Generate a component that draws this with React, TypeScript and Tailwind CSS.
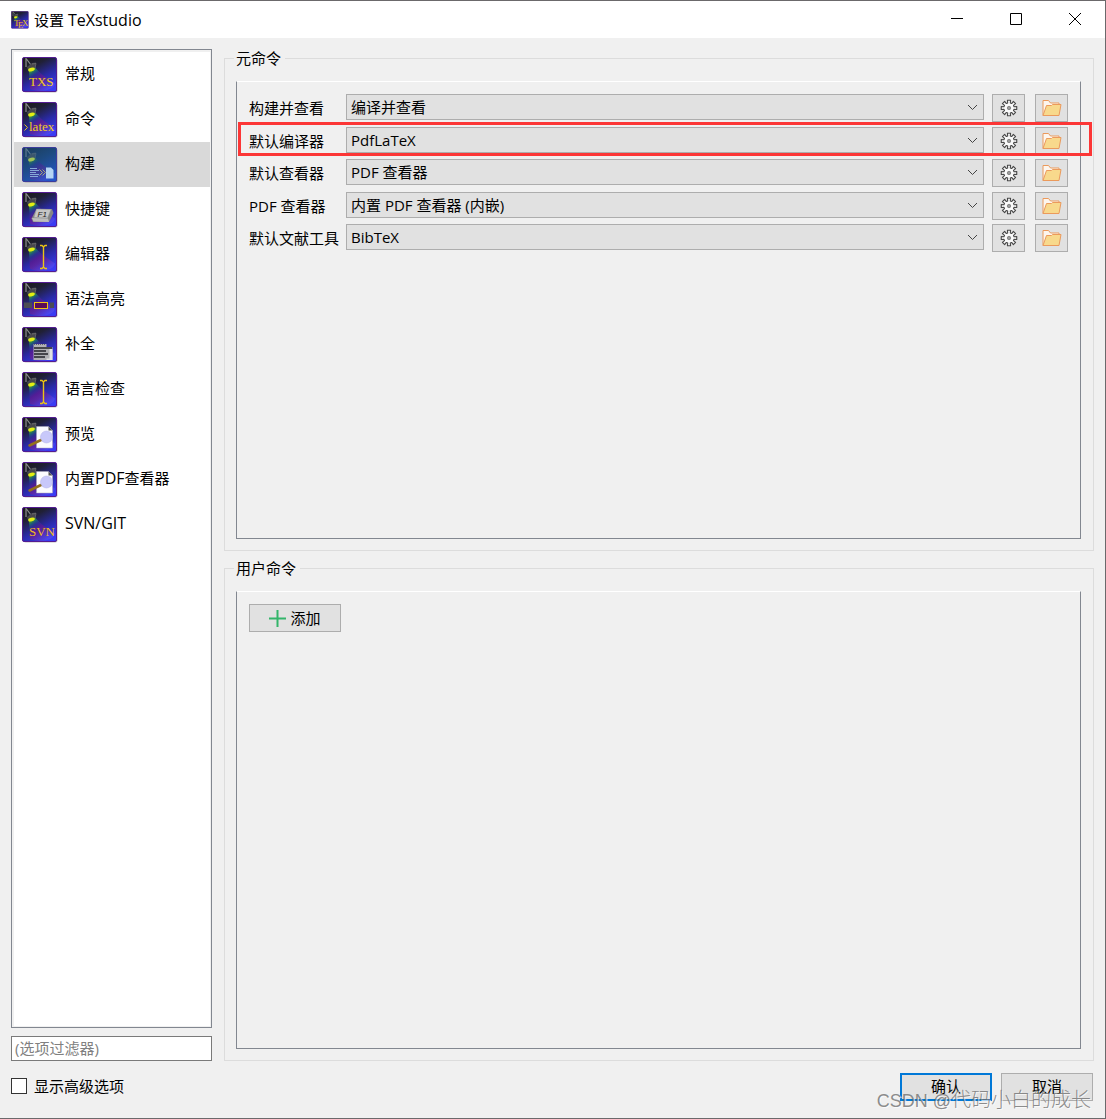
import React, { useState } from "react";

type Glyph =
  | "txs"
  | "latex"
  | "build"
  | "key"
  | "cursor"
  | "highlight"
  | "complete"
  | "preview"
  | "svn"
  | "tex";

const pages: { label: string; glyph: Glyph }[] = [
  { label: "常规", glyph: "txs" },
  { label: "命令", glyph: "latex" },
  { label: "构建", glyph: "build" },
  { label: "快捷键", glyph: "key" },
  { label: "编辑器", glyph: "cursor" },
  { label: "语法高亮", glyph: "highlight" },
  { label: "补全", glyph: "complete" },
  { label: "语言检查", glyph: "cursor" },
  { label: "预览", glyph: "preview" },
  { label: "内置PDF查看器", glyph: "preview" },
  { label: "SVN/GIT", glyph: "svn" },
];

const commands = [
  { id: "build", label: "构建并查看", value: "编译并查看", marked: false },
  { id: "compiler", label: "默认编译器", value: "PdfLaTeX", marked: true },
  { id: "viewer", label: "默认查看器", value: "PDF 查看器", marked: false },
  { id: "pdf", label: "PDF 查看器", value: "内置 PDF 查看器 (内嵌)", marked: false },
  { id: "bib", label: "默认文献工具", value: "BibTeX", marked: false },
];

function IconDefs() {
  return (
    <svg className="absolute h-0 w-0" aria-hidden="true">
      <defs>
        <linearGradient id="tile" x1="0.2" y1="0" x2="0.75" y2="1">
          <stop offset="0" stopColor="#1c1c1e" />
          <stop offset="0.25" stopColor="#202036" />
          <stop offset="0.6" stopColor="#2a2aa6" />
          <stop offset="1" stopColor="#3a3cf4" />
        </linearGradient>
        <linearGradient id="tileOn" x1="0.2" y1="0" x2="0.75" y2="1">
          <stop offset="0" stopColor="#1c3f5e" />
          <stop offset="0.4" stopColor="#1d4a80" />
          <stop offset="1" stopColor="#2456c8" />
        </linearGradient>
        <linearGradient id="beam" x1="9" y1="11" x2="24" y2="33" gradientUnits="userSpaceOnUse">
          <stop offset="0" stopColor="#b8d000" />
          <stop offset="0.1" stopColor="#3a9a3c" />
          <stop offset="0.2" stopColor="#1d5a7e" />
          <stop offset="0.3" stopColor="#30309a" stopOpacity="0.8" />
          <stop offset="0.45" stopColor="#5a1a94" stopOpacity="0.9" />
          <stop offset="0.65" stopColor="#7a2090" stopOpacity="0.6" />
          <stop offset="1" stopColor="#5a50f0" stopOpacity="0.6" />
        </linearGradient>
      </defs>
    </svg>
  );
}

function GlyphShape({ glyph }: { glyph: Glyph }) {
  const serif = "font-[Liberation_Serif]";
  switch (glyph) {
    case "txs":
      return <text x="7" y="29" fontSize="13" fill="#f0cc1c" className={serif}>TXS</text>;
    case "svn":
      return <text x="7" y="29" fontSize="13" fill="#f0bc1c" className={serif}>SVN</text>;
    case "latex":
      return (
        <>
          <path d="M2.5 22.500l3 3-3 3" fill="none" stroke="#e8c21c" />
          <text x="7" y="29" fontSize="13" fill="#f0cc1c" className={serif}>latex</text>
        </>
      );
    case "tex":
      return (
        <>
          <text x="6" y="30" fontSize="18" fill="#e8c21c" className={serif}>T</text>
          <text x="14" y="34" fontSize="17" fill="#e8c21c" className={serif}>E</text>
          <text x="22" y="30" fontSize="18" fill="#e8c21c" className={serif}>X</text>
        </>
      );
    case "build":
      return (
        <>
          <path d="M8 21.500h7M8 23.500h9M8 25.500h6M8 27.500h9M8 29.500h8" stroke="#86a8d8" />
          <path d="M17.500 22.500l3 3-3 3M20.500 22.500l3 3-3 3" fill="none" stroke="#a8a878" />
          <path d="M24 20.500h5l2.500 2.500v8.500h-7.500z" fill="#b4d4f4" />
        </>
      );
    case "key":
      return (
        <>
          <path d="M14.500 17h15.500l1.500 4-4.500 9h-16l-1.500-3.500z" fill="#858585" />
          <path d="M14.500 17l14.500.5-3.500 8.500-13.500-.5z" fill="#c6c6c6" stroke="#9a9a9a" strokeWidth="0.5" />
          <path d="M10 26l16 .5 1 3.500-15.500-.5z" fill="#bdbdbd" />
          <text x="15.500" y="25" fontSize="8" fontStyle="italic" fill="#222" className="font-[Liberation_Sans]">F1</text>
        </>
      );
    case "cursor":
      return (
        <path
          d="M18 8.500h2l1.500 1.500 1.500-1.500h2M21.500 10v20M18 31.500h2l1.500-1.500 1.500 1.500h2"
          fill="none"
          stroke="#ecc414"
          strokeWidth="1.400"
        />
      );
    case "highlight":
      return (
        <>
          <path d="M2 20.500h8v5.500H2zM28 20.500h4v5.500h-4z" fill="#4c4c54" />
          <rect x="12.500" y="20.500" width="13" height="6" fill="#5c0a58" stroke="#ecc414" />
        </>
      );
    case "complete":
      return (
        <>
          <path d="M11.500 17h13v3h6v13h-19z" fill="#b0b0b4" />
          <path d="M12 17.500h12" stroke="#60606c" strokeDasharray="1 1" />
          <path d="M12 21h18M12 24h12M12 27h14M12 30h11" stroke="#46464c" strokeWidth="1.800" />
          <path d="M27.500 22h3v11h-6v-1.500h3z" fill="#e2e2e2" />
        </>
      );
    case "preview":
      return (
        <>
          <path d="M14.500 9.500h12l4 4v17.500h-16z" fill="#fbfbff" stroke="#a8a8b8" strokeWidth="0.500" />
          <path d="M26.500 9.500v4h4z" fill="#555" />
          <path d="M7.500 28.500l11.500-5.500" stroke="#94701c" strokeWidth="2.500" strokeLinecap="round" />
          <circle cx="24.500" cy="20" r="6" fill="#c8c8fa" stroke="#b0b0e8" strokeWidth="0.500" />
        </>
      );
  }
}

function Tile({ glyph, className, active = false }: { glyph: Glyph; className: string; active?: boolean }) {
  return (
    <svg viewBox="0 0 36 36" className={className} aria-hidden="true">
      <rect x="1.500" y="1.500" width="34" height="34" rx="2" fill="#000" opacity="0.25" />
      <rect x="0.500" y="0.500" width="34" height="34" rx="1.500" fill={active ? "url(#tileOn)" : "url(#tile)"} />
      <path
        d="M7 13l6-2.500 7 7 13 9c-1 7-15 9.500-25 5.500z"
        fill="url(#beam)"
        opacity={active ? 0.5 : 0.9}
      />
      <path d="M4 1v9M4.500 2l6 8" fill="none" stroke={active ? "#5c7890" : "#8a8a8c"} strokeWidth="1.200" />
      <path d="M5 10l5-4 4-.5-1.500 6-6.500 1.500z" fill={active ? "#3a566c" : "#48484c"} />
      <path d="M10 7l4-.5-1 4.500" fill="none" stroke={active ? "#4c6880" : "#707074"} strokeWidth="0.800" />
      <ellipse cx="9.500" cy="12.500" rx="3.400" ry="1.900" fill={active ? "#a2c458" : "#e2ee14"} transform="rotate(-15 9.5 12.5)" />
      <GlyphShape glyph={glyph} />
      <rect x="0.500" y="0.500" width="34" height="34" rx="1.500" fill="none" stroke={active ? "#3c3c9c" : "#541c92"} />
    </svg>
  );
}

const gearPath = (() => {
  const points: string[] = [];
  for (let i = 0; i < 8; i++) {
    const a = (i * Math.PI) / 4;
    const steps: [number, number][] = [
      [-0.25, 5.2],
      [-0.2, 7.9],
      [0.2, 7.9],
      [0.25, 5.2],
    ];
    for (const [d, r] of steps) {
      points.push(`${(9 + r * Math.sin(a + d)).toFixed(2)} ${(9 - r * Math.cos(a + d)).toFixed(2)}`);
    }
  }
  return `M${points.join("L")}Z`;
})();

function GearIcon() {
  return (
    <svg viewBox="0 0 18 18" className="h-[18px] w-[18px]" aria-hidden="true">
      <path d={gearPath} fill="#fafafa" stroke="#484848" strokeWidth="1.100" strokeLinejoin="round" />
      <circle cx="9" cy="9" r="1.700" fill="#999" stroke="#777" strokeWidth="0.800" />
    </svg>
  );
}

function FolderIcon() {
  return (
    <svg viewBox="0 0 20 18" className="h-[18px] w-5" aria-hidden="true">
      <path d="M1 16.500V1.500h5.500l2 2.500H17v3" fill="#fdf6ee" stroke="#eb9a5c" strokeLinejoin="round" />
      <path d="M4.500 6.500h5l1-1h8.500l-2 11H1z" fill="#f8d98c" stroke="#eb9a5c" strokeLinejoin="round" />
    </svg>
  );
}

function Group({ title, children }: { title: string; children: React.ReactNode }) {
  return (
    <fieldset className="flex min-w-0 flex-1 flex-col border border-[#dcdcdc] pt-[13px] pr-3 pb-[11px] pl-[11px]">
      <legend className="-ml-0.5 h-[19px] px-0.5 pr-1 leading-[19px]">{title}</legend>
      <div className="flex-1 border border-[#828790] border-t-white p-3">{children}</div>
    </fieldset>
  );
}

const button = "flex items-center justify-center border border-[#adadad] bg-[#e1e1e1]";

export default function App() {
  const [current, setCurrent] = useState(2);

  return (
    <div className="relative flex min-h-screen flex-col border-t border-r border-b border-[#6b696b] bg-[#f0f0f0] font-['Open_Sans','Noto_Sans_CJK_SC',sans-serif] text-[15px] leading-5 text-black">
      <IconDefs />
      <header className="flex h-[37px] items-center bg-white pl-[11px]">
        <Tile glyph="tex" className="h-[18px] w-[18px]" />
        <h1 className="ml-[5px] flex-1">
          设置 <span className="text-[16px]">TeXstudio</span>
        </h1>
        <button type="button" aria-label="最小化" className="flex h-full w-[59px] items-center justify-center">
          <svg viewBox="0 0 13 13" className="h-[13px] w-[13px]"><path d="M0 5.500h12" stroke="#000" /></svg>
        </button>
        <button type="button" aria-label="最大化" className="flex h-full w-[59px] items-center justify-center">
          <svg viewBox="0 0 13 13" className="h-[13px] w-[13px]"><path d="M.5.5h11v11H.5z" fill="none" stroke="#000" /></svg>
        </button>
        <button type="button" aria-label="关闭" className="flex h-full w-[59px] items-center justify-center">
          <svg viewBox="0 0 13 13" className="h-[13px] w-[13px]"><path d="M0 0l12 12M12 0L0 12" stroke="#000" /></svg>
        </button>
      </header>

      <main className="flex flex-1 gap-3 px-[11px] pt-[11px]">
        <div className="flex w-[201px] shrink-0 flex-col gap-2">
          <nav className="flex flex-1 flex-col border border-[#828790] bg-[#f0f0f0] pt-0.5 pr-px pb-px pl-0.5">
            <ul className="flex-1 bg-white">
              {pages.map((page, i) => (
                <li key={page.label}>
                  <button
                    type="button"
                    onClick={() => setCurrent(i)}
                    aria-current={i === current ? "page" : undefined}
                    className={`flex h-[45px] w-full items-center pl-2 text-left ${i === current ? "bg-[#d9d9d9]" : ""}`}
                  >
                    <Tile glyph={page.glyph} active={i === current} className="h-9 w-9" />
                    <span className="ml-[7px] pb-1">
                      {page.label.split(/([A-Z/]+)/).map((part, n) =>
                        n % 2 ? <span key={n} className="text-[16px]">{part}</span> : part
                      )}
                    </span>
                  </button>
                </li>
              ))}
            </ul>
          </nav>
          <input
            type="text"
            aria-label="选项过滤器"
            placeholder="(选项过滤器)"
            className="h-[25px] w-full border border-[#7a7a7a] bg-white px-[3px] pb-0.5 outline-none placeholder:text-[#808080]"
          />
        </div>

        <div className="flex min-w-0 flex-1 flex-col gap-2">
          <Group title="元命令">
            <div className="flex h-[158px] flex-col justify-between">
              {commands.map((c) => (
                <div key={c.id} className="relative flex h-7 items-start">
                  <label htmlFor={c.id} className="w-[97px] shrink-0 leading-7 whitespace-nowrap">
                    {c.label}
                  </label>
                  <div className="relative min-w-0 flex-1">
                    <select
                      id={c.id}
                      className="block h-[26px] w-full appearance-none border border-[#adadad] bg-[#e1e1e1] px-1 leading-6 outline-none"
                    >
                      <option>{c.value}</option>
                    </select>
                    <svg viewBox="0 0 11 7" className="pointer-events-none absolute top-[10px] right-[6px] h-[7px] w-[11px]">
                      <path d="M1 1l4.500 4.500L10 1" fill="none" stroke="#444" />
                    </svg>
                  </div>
                  <button type="button" aria-label={`${c.label} 配置`} className={`${button} ml-2 h-7 w-[33px]`}>
                    <GearIcon />
                  </button>
                  <button type="button" aria-label={`${c.label} 浏览`} className={`${button} ml-[10px] h-7 w-[33px]`}>
                    <FolderIcon />
                  </button>
                  {c.marked && (
                    <div className="pointer-events-none absolute -top-[5px] -right-6 -bottom-px -left-[11px] border-3 border-[#fc3636]" />
                  )}
                </div>
              ))}
            </div>
          </Group>
          <Group title="用户命令">
            <button type="button" className={`${button} h-7 w-[92px] gap-1`}>
              <svg viewBox="0 0 17 17" className="h-[17px] w-[17px]" aria-hidden="true">
                <path d="M8.500 0v17M0 8.500h17" stroke="#33b56a" strokeWidth="2" />
              </svg>
              添加
            </button>
          </Group>
        </div>
      </main>

      <footer className="flex items-center pt-3 pr-3 pb-[17px] pl-[11px]">
        <label className="flex flex-1 items-center gap-[7px] pb-0.5">
          <input type="checkbox" className="h-4 w-4 appearance-none border border-[#333] bg-white checked:bg-[#0078d7]" />
          显示高级选项
        </label>
        <button type="button" className="flex h-7 w-[92px] items-center justify-center border-2 border-[#0078d7] bg-[#e1e1e1] pb-0.5">
          确认
        </button>
        <button type="button" className={`${button} ml-[9px] h-7 w-[92px] pb-0.5`}>
          取消
        </button>
      </footer>

      <div className="pointer-events-none absolute right-[14px] bottom-0.5 font-['Liberation_Sans','Noto_Sans_CJK_SC',sans-serif] text-[20px] leading-[30px] font-light whitespace-nowrap text-[#707070]/80 [text-shadow:1px_1px_0_#ffffffaa]">
        <span className="text-[18px]">CSDN @</span>代码小白的成长
      </div>
    </div>
  );
}
